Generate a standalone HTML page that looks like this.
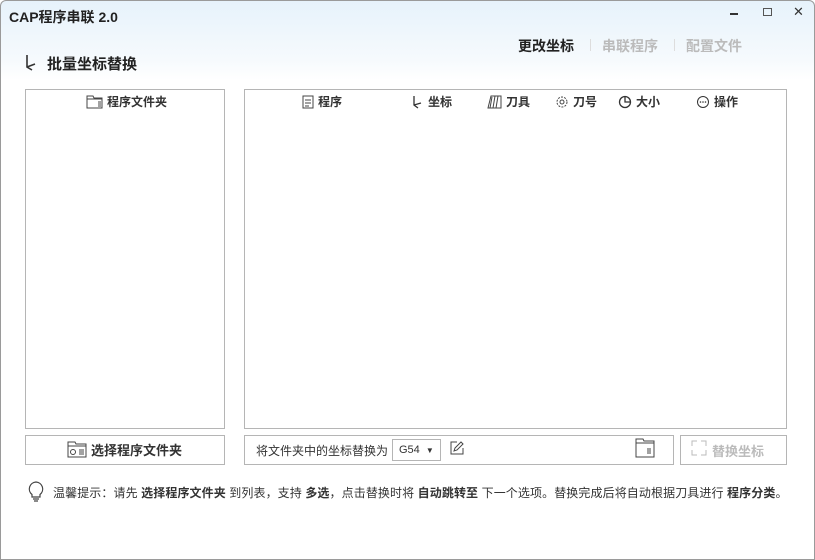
<!DOCTYPE html>
<html><head><meta charset="utf-8"><style>
*{margin:0;padding:0;box-sizing:border-box}
body{width:815px;height:560px;font-family:"Liberation Sans","Noto Sans CJK SC",sans-serif;background:#fff;overflow:hidden;position:relative}
.win{position:absolute;left:0;top:0;width:815px;height:560px;border-radius:6px 6px 0 0;box-shadow:inset 0 0 0 1px #9a9a9a;background:linear-gradient(#e6f2fb 0,#f6fafd 60px,#fff 80px)}
.abs{position:absolute}
.title{left:9px;top:7px;font-size:14px;font-weight:bold;color:#222}
.box{border:1px solid #b5b5b5;background:#fff}
.hd{font-size:12px;font-weight:bold;color:#333;display:flex;align-items:center;gap:4px}
.tab{font-size:14px;font-weight:bold}
</style></head><body>
<div class="win">
<div class="abs title">CAP程序串联 2.0</div>
<div class="abs" style="left:730px;top:13px;width:8px;height:2px;background:#333"></div>
<div class="abs" style="left:763px;top:8px;width:9px;height:8px;border:1px solid #555"></div>
<div class="abs" style="left:793px;top:4px;font-size:13px;color:#333">✕</div>
<div class="abs tab" style="left:518px;top:36px;color:#222">更改坐标</div>
<div class="abs" style="left:590px;top:39px;width:1px;height:12px;background:#ddd"></div>
<div class="abs tab" style="left:602px;top:36px;color:#bbb">串联程序</div>
<div class="abs" style="left:674px;top:39px;width:1px;height:12px;background:#ddd"></div>
<div class="abs tab" style="left:686px;top:36px;color:#bbb">配置文件</div>
<svg class="abs" style="left:24px;top:54px" width="16" height="18"><path d="M3 1v12l5 3M3 13l8-3" stroke="#333" stroke-width="1.6" fill="none"/></svg>
<div class="abs" style="left:47px;top:53px;font-size:15px;font-weight:bold;color:#222">批量坐标替换</div>
<div class="abs box" style="left:25px;top:89px;width:200px;height:340px"></div>
<div class="abs hd" style="left:86px;top:93px"><svg width="17" height="14"><path d="M1 1h6l1 2h8v10H1z M1 4h15" stroke="#444" fill="none"/><path d="M12 7h3M12 9h3M12 11h3" stroke="#444"/></svg>程序文件夹</div>
<div class="abs box" style="left:244px;top:89px;width:543px;height:340px"></div>
<div class="abs hd" style="left:302px;top:93px"><svg width="12" height="14"><rect x="1" y="1" width="10" height="12" fill="none" stroke="#444"/><path d="M3 5h6M3 8h6M3 11h4" stroke="#444"/></svg>程序</div>
<div class="abs hd" style="left:412px;top:93px"><svg width="12" height="14"><path d="M2 1v9l4 3M2 10l7-2" stroke="#333" stroke-width="1.3" fill="none"/></svg>坐标</div>
<div class="abs hd" style="left:487px;top:93px"><svg width="15" height="14"><path d="M1 13L4 1h10v12zM5 2L3 13M8 1L6 13M11 1L9 13" stroke="#444" fill="none"/></svg>刀具</div>
<div class="abs hd" style="left:555px;top:93px"><svg width="14" height="14"><circle cx="7" cy="7" r="5" fill="none" stroke="#444" stroke-dasharray="2 1.2"/><circle cx="7" cy="7" r="2" fill="none" stroke="#444"/></svg>刀号</div>
<div class="abs hd" style="left:618px;top:93px"><svg width="14" height="14"><circle cx="7" cy="7" r="5.5" fill="none" stroke="#333" stroke-width="1.3"/><path d="M7 2v5h5" stroke="#333" stroke-width="1.3" fill="none"/></svg>大小</div>
<div class="abs hd" style="left:696px;top:93px"><svg width="14" height="14"><circle cx="7" cy="7" r="5.5" fill="none" stroke="#333"/><circle cx="4.5" cy="7" r=".8" fill="#333"/><circle cx="7" cy="7" r=".8" fill="#333"/><circle cx="9.5" cy="7" r=".8" fill="#333"/></svg>操作</div>
<div class="abs box" style="left:25px;top:435px;width:200px;height:30px"></div>
<div class="abs hd" style="left:67px;top:440px;font-size:13px"><svg width="20" height="17"><path d="M1 1h7l1 2h10v13H1z M1 5h18" stroke="#444" fill="none"/><circle cx="6" cy="11" r="2.5" stroke="#444" fill="none"/><path d="M12 9h5M12 11h5M12 13h5" stroke="#444"/></svg>选择程序文件夹</div>
<div class="abs box" style="left:244px;top:435px;width:430px;height:30px"></div>
<div class="abs" style="left:256px;top:442px;font-size:12px;color:#333">将文件夹中的坐标替换为</div>
<div class="abs box" style="left:392px;top:439px;width:49px;height:22px;font-size:11px;color:#333;padding:4px 0 0 6px">G54 <span style="font-size:8px;margin-left:3px">▼</span></div>
<svg class="abs" style="left:449px;top:441px" width="15" height="15"><path d="M8 1H2v12h12V7" stroke="#444" fill="none"/><path d="M5 10l1-3 6-6 2 2-6 6z" stroke="#444" fill="none"/></svg>
<svg class="abs" style="left:635px;top:438px" width="20" height="20"><path d="M1 1h7l1 2h10v16H1z M1 5h18" stroke="#444" fill="none"/><path d="M12 11h4M12 13h4M12 15h4" stroke="#444"/></svg>
<div class="abs box" style="left:680px;top:435px;width:107px;height:30px"></div>
<svg class="abs" style="left:691px;top:440px" width="16" height="16"><path d="M1 6V1h5M15 10v5h-5M10 1h5v5M6 15H1v-5" stroke="#bbb" fill="none"/></svg>
<div class="abs" style="left:712px;top:441px;font-size:13px;font-weight:bold;color:#bbb">替换坐标</div>
<svg class="abs" style="left:27px;top:481px" width="18" height="21"><path d="M9 1a7 7 0 0 0-4 12.5V16h8v-2.5A7 7 0 0 0 9 1zM6 18h6M7 20h4" stroke="#444" fill="none" stroke-width="1.2"/></svg>
<div class="abs" style="left:53px;top:484px;font-size:12px;color:#333;white-space:nowrap;letter-spacing:0.1px">温馨提示：请先 <b>选择程序文件夹</b> 到列表，支持 <b>多选</b>，点击替换时将 <b>自动跳转至</b> 下一个选项。替换完成后将自动根据刀具进行 <b>程序分类</b>。</div>
</div>
</body></html>
